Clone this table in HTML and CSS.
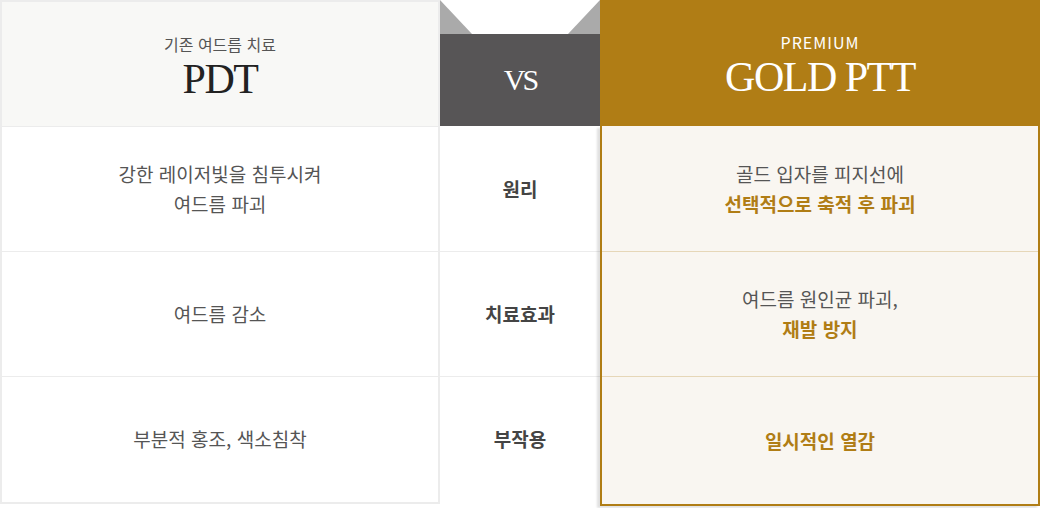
FILE: index.html
```html
<!DOCTYPE html>
<html lang="ko">
<head>
    <meta charset="UTF-8">
    <meta name="viewport" content="width=device-width, initial-scale=1.0">
    <title>PDT vs GOLD PTT</title>
    <link rel="stylesheet" href="styles.css">
</head>
<body>
    <div class="compare">
        <!-- 기존 치료 -->
        <div class="col col-pdt">
            <div class="col-head">
                <p class="head-sub">기존 여드름 치료</p>
                <p class="head-title">PDT</p>
            </div>
            <div class="cell"><p>강한 레이저빛을 침투시켜<br>여드름 파괴</p></div>
            <div class="cell"><p>여드름 감소</p></div>
            <div class="cell"><p>부분적 홍조, 색소침착</p></div>
        </div>

        <!-- 항목 -->
        <div class="col col-vs">
            <div class="vs-head">
                <div class="vs-tabs">
                    <span class="tab tab-left"></span>
                    <span class="tab tab-right"></span>
                </div>
                <div class="vs-box">VS</div>
            </div>
            <div class="cell cell-label"><p>원리</p></div>
            <div class="cell cell-label"><p>치료효과</p></div>
            <div class="cell cell-label"><p>부작용</p></div>
        </div>

        <!-- 골드 PTT -->
        <div class="col col-gold">
            <div class="col-head gold-head">
                <p class="head-sub">PREMIUM</p>
                <p class="head-title">GOLD PTT</p>
            </div>
            <div class="gold-body">
                <div class="cell"><p>골드 입자를 피지선에<br><strong>선택적으로 축적 후 파괴</strong></p></div>
                <div class="cell"><p>여드름 원인균 파괴,<br><strong>재발 방지</strong></p></div>
                <div class="cell"><p><strong>일시적인 열감</strong></p></div>
            </div>
        </div>
    </div>
</body>
</html>
```

FILE: styles.css
```css
body {
    margin: 0;
    padding: 0;
    background-color: #ffffff;
    font-family: 'Noto Sans CJK KR', 'Noto Sans', sans-serif;
}
p {
    margin: 0;
}
.compare {
    display: flex;
    width: 1040px;
    height: 508px;
}
.col {
    display: flex;
    flex-direction: column;
    box-sizing: border-box;
}
.col-pdt {
    width: 440px;
    height: 504px;
    border: 2px solid #ececec;
}
.col-head {
    height: 124px;
    display: flex;
    flex-direction: column;
    align-items: center;
    padding-top: 30px;
    box-sizing: border-box;
    background-color: #f8f8f6;
}
.head-sub {
    font-size: 16px;
    line-height: 24px;
    color: #555;
}
.head-title {
    font-family: 'Liberation Serif', serif;
    font-size: 42px;
    line-height: 46px;
    color: #222;
    letter-spacing: -1.5px;
}
.cell {
    height: 125px;
    box-sizing: border-box;
    border-top: 1px solid #ececec;
    display: flex;
    align-items: center;
    justify-content: center;
    text-align: center;
    font-size: 19px;
    line-height: 30px;
    color: #555;
}
.col-pdt .cell:last-child {
    height: 124px;
}

/* VS column */
.col-vs {
    width: 160px;
}
.vs-head {
    height: 126px;
    display: flex;
    flex-direction: column;
}
.vs-tabs {
    height: 34px;
    display: flex;
    justify-content: space-between;
}
.tab {
    width: 32px;
    height: 34px;
    background-color: #aaaaaa;
}
.tab-left {
    clip-path: polygon(0 0, 0 100%, 100% 100%);
}
.tab-right {
    clip-path: polygon(100% 0, 100% 100%, 0 100%);
}
.vs-box {
    flex: 1;
    display: flex;
    align-items: center;
    justify-content: center;
    background-color: #575556;
    color: #ffffff;
    font-family: 'Liberation Serif', serif;
    font-size: 30px;
    letter-spacing: -3px;
}
.cell-label {
    font-weight: bold;
    color: #444;
}
.col-vs .vs-head + .cell {
    border-top: none;
}

/* Gold column */
.col-gold {
    width: 440px;
}
.gold-head {
    height: 126px;
    background-color: #b07d15;
}
.gold-head .head-sub {
    color: #ffffff;
    letter-spacing: 1px;
}
.gold-head .head-title {
    color: #ffffff;
}
.gold-body {
    height: 380px;
    box-sizing: border-box;
    border: 2px solid #b07d15;
    border-top: none;
    background-color: #f9f6f1;
    box-shadow: -3px 2px 2px rgba(0, 0, 0, 0.12);
    display: flex;
    flex-direction: column;
}
.gold-body .cell {
    border-top-color: #e6d7b8;
}
.gold-body .cell:first-child {
    border-top: none;
}
.gold-body .cell:last-child {
    flex: 1;
}
.gold-body strong {
    color: #b07d15;
}
```
